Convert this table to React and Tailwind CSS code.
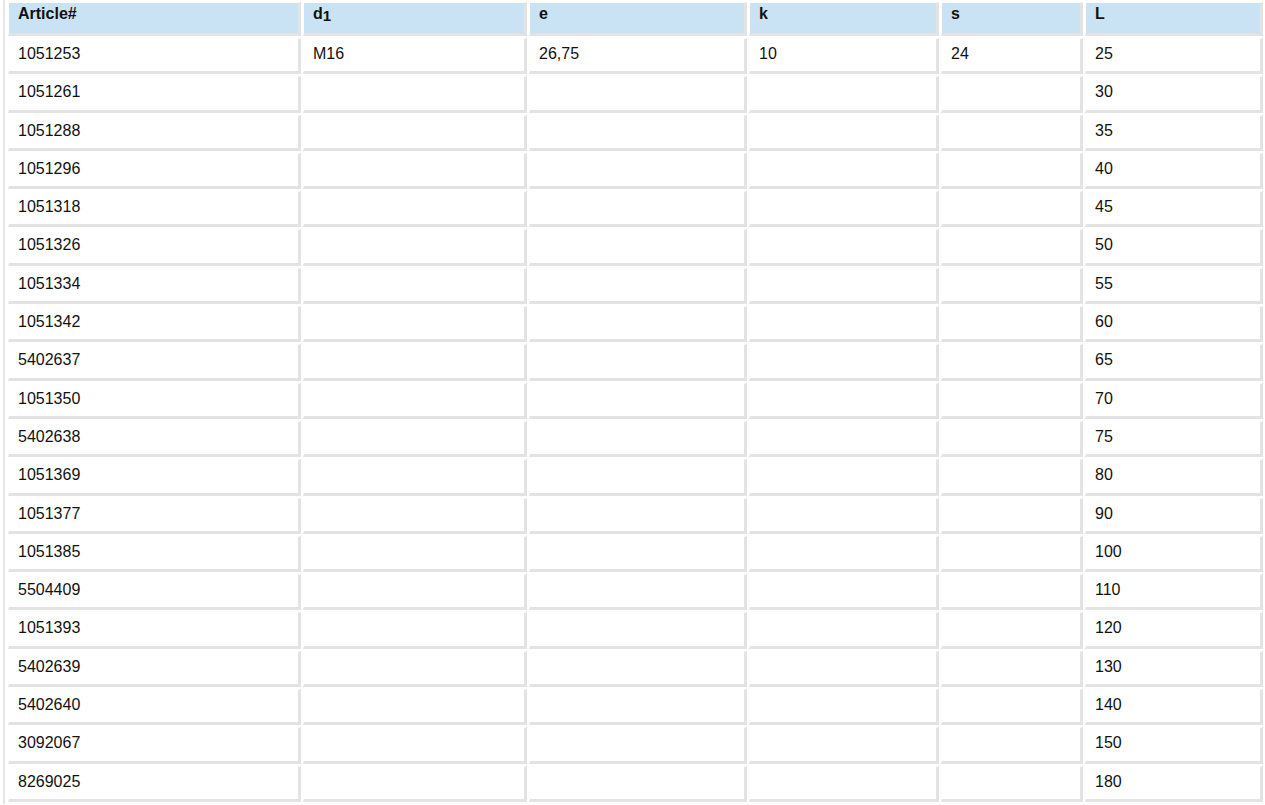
const rows = [
  ["1051253", "M16", "26,75", "10", "24", "25"],
  ["1051261", "", "", "", "", "30"],
  ["1051288", "", "", "", "", "35"],
  ["1051296", "", "", "", "", "40"],
  ["1051318", "", "", "", "", "45"],
  ["1051326", "", "", "", "", "50"],
  ["1051334", "", "", "", "", "55"],
  ["1051342", "", "", "", "", "60"],
  ["5402637", "", "", "", "", "65"],
  ["1051350", "", "", "", "", "70"],
  ["5402638", "", "", "", "", "75"],
  ["1051369", "", "", "", "", "80"],
  ["1051377", "", "", "", "", "90"],
  ["1051385", "", "", "", "", "100"],
  ["5504409", "", "", "", "", "110"],
  ["1051393", "", "", "", "", "120"],
  ["5402639", "", "", "", "", "130"],
  ["5402640", "", "", "", "", "140"],
  ["3092067", "", "", "", "", "150"],
  ["8269025", "", "", "", "", "180"],
];

const widths = ["w-[293px]", "w-[224px]", "w-[218px]", "w-[190px]", "w-[142px]", "w-[178px]"];

const cell =
  "align-top text-left border-t border-l border-white border-r-[3px] border-b-[3px] border-r-[#e3e3e3] border-b-[#e3e3e3] pl-[9px]";

export default function App() {
  return (
    <div className="bg-white min-h-screen pl-[3px] font-['Liberation_Sans',Arial,sans-serif] text-[16px] leading-[18px] text-[#111]">
      <div className="border-l-2 border-[#e6e6e6]">
        <table className="ml-px w-[1259px] table-fixed border-separate border-spacing-[2px]">
          <thead>
            <tr>
              <th className={`${cell} ${widths[0]} h-[34px] pt-[2px] bg-[#c9e2f4] font-bold`}>Article#</th>
              <th className={`${cell} ${widths[1]} h-[34px] pt-[2px] bg-[#c9e2f4] font-bold`}>
                d<sub className="text-[15px] relative top-[2px]">1</sub>
              </th>
              <th className={`${cell} ${widths[2]} h-[34px] pt-[2px] bg-[#c9e2f4] font-bold`}>e</th>
              <th className={`${cell} ${widths[3]} h-[34px] pt-[2px] bg-[#c9e2f4] font-bold`}>k</th>
              <th className={`${cell} ${widths[4]} h-[34px] pt-[2px] bg-[#c9e2f4] font-bold`}>s</th>
              <th className={`${cell} ${widths[5]} h-[34px] pt-[2px] bg-[#c9e2f4] font-bold`}>L</th>
            </tr>
          </thead>
          <tbody>
            {rows.map(r => (
              <tr key={r[0]}>
                {r.map((v, i) => (
                  <td key={i} className={`${cell} h-[36.3px] pt-[6px]`}>
                    {v}
                  </td>
                ))}
              </tr>
            ))}
          </tbody>
        </table>
      </div>
    </div>
  );
}
